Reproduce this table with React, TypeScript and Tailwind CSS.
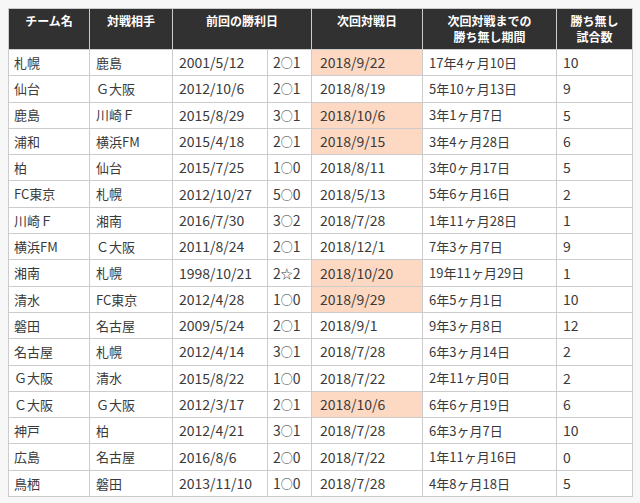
type Row = {
  team: string;
  opp: string;
  last: string;
  score: [string, string, string];
  next: string;
  hl: boolean;
  span: string;
  games: string;
};

const rows: Row[] = [
  { team: '札幌', opp: '鹿島', last: '2001/5/12', score: ['2', '○', '1'], next: '2018/9/22', hl: true, span: '17年4ヶ月10日', games: '10' },
  { team: '仙台', opp: 'Ｇ大阪', last: '2012/10/6', score: ['2', '○', '1'], next: '2018/8/19', hl: false, span: '5年10ヶ月13日', games: '9' },
  { team: '鹿島', opp: '川崎Ｆ', last: '2015/8/29', score: ['3', '○', '1'], next: '2018/10/6', hl: true, span: '3年1ヶ月7日', games: '5' },
  { team: '浦和', opp: '横浜FM', last: '2015/4/18', score: ['2', '○', '1'], next: '2018/9/15', hl: true, span: '3年4ヶ月28日', games: '6' },
  { team: '柏', opp: '仙台', last: '2015/7/25', score: ['1', '○', '0'], next: '2018/8/11', hl: false, span: '3年0ヶ月17日', games: '5' },
  { team: 'FC東京', opp: '札幌', last: '2012/10/27', score: ['5', '○', '0'], next: '2018/5/13', hl: false, span: '5年6ヶ月16日', games: '2' },
  { team: '川崎Ｆ', opp: '湘南', last: '2016/7/30', score: ['3', '○', '2'], next: '2018/7/28', hl: false, span: '1年11ヶ月28日', games: '1' },
  { team: '横浜FM', opp: 'Ｃ大阪', last: '2011/8/24', score: ['2', '○', '1'], next: '2018/12/1', hl: false, span: '7年3ヶ月7日', games: '9' },
  { team: '湘南', opp: '札幌', last: '1998/10/21', score: ['2', '☆', '2'], next: '2018/10/20', hl: true, span: '19年11ヶ月29日', games: '1' },
  { team: '清水', opp: 'FC東京', last: '2012/4/28', score: ['1', '○', '0'], next: '2018/9/29', hl: true, span: '6年5ヶ月1日', games: '10' },
  { team: '磐田', opp: '名古屋', last: '2009/5/24', score: ['2', '○', '1'], next: '2018/9/1', hl: false, span: '9年3ヶ月8日', games: '12' },
  { team: '名古屋', opp: '札幌', last: '2012/4/14', score: ['3', '○', '1'], next: '2018/7/28', hl: false, span: '6年3ヶ月14日', games: '2' },
  { team: 'Ｇ大阪', opp: '清水', last: '2015/8/22', score: ['1', '○', '0'], next: '2018/7/22', hl: false, span: '2年11ヶ月0日', games: '2' },
  { team: 'Ｃ大阪', opp: 'Ｇ大阪', last: '2012/3/17', score: ['2', '○', '1'], next: '2018/10/6', hl: true, span: '6年6ヶ月19日', games: '6' },
  { team: '神戸', opp: '柏', last: '2012/4/21', score: ['3', '○', '1'], next: '2018/7/28', hl: false, span: '6年3ヶ月7日', games: '10' },
  { team: '広島', opp: '名古屋', last: '2016/8/6', score: ['2', '○', '0'], next: '2018/7/22', hl: false, span: '1年11ヶ月16日', games: '0' },
  { team: '鳥栖', opp: '磐田', last: '2013/11/10', score: ['1', '○', '0'], next: '2018/7/28', hl: false, span: '4年8ヶ月18日', games: '5' },
];

const th = 'bg-[#313131] text-white font-bold text-[12px] leading-[16px] align-top text-center pt-[4px] border border-[#cccccc]';
const td = 'border border-[#cccccc] px-[5px] align-middle text-left whitespace-nowrap';

export default function App() {
  return (
    <div
      className="w-[640px] h-[503px] bg-[#f7f7f7] pt-[8px] pl-[8px] text-[#3a3a3a]"
      style={{ fontFamily: '"Noto Sans CJK JP", "Noto Sans", sans-serif' }}
    >
      <table className="border-collapse table-fixed w-[624px] bg-white">
        <colgroup>
          <col className="w-[81px]" />
          <col className="w-[83px]" />
          <col className="w-[95px]" />
          <col className="w-[44px]" />
          <col className="w-[111px]" />
          <col className="w-[134px]" />
          <col className="w-[76px]" />
        </colgroup>
        <thead>
          <tr className="h-[41px]">
            <th className={th}>チーム名</th>
            <th className={th}>対戦相手</th>
            <th className={th} colSpan={2}>前回の勝利日</th>
            <th className={th}>次回対戦日</th>
            <th className={th}>次回対戦までの<br />勝ち無し期間</th>
            <th className={th}>勝ち無し<br />試合数</th>
          </tr>
        </thead>
        <tbody>
          {rows.map((r) => (
            <tr key={r.team} className="h-[26.3px]">
              <td className={`${td} text-[13px]`}>{r.team}</td>
              <td className={`${td} text-[13px] pl-[6px]`}>{r.opp}</td>
              <td className={`${td} text-[14px] pl-[6px]`}>{r.last}</td>
              <td className={`${td} text-[14px] pl-[5px]`}>
                {r.score[0]}
                <span className="text-[12px]">{r.score[1]}</span>
                {r.score[2]}
              </td>
              <td className={`${td} text-[14px] pl-[8px] ${r.hl ? 'bg-[#fdd8c2]' : ''}`}>{r.next}</td>
              <td className={`${td} text-[13px] pl-[6px]`}>{r.span}</td>
              <td className={`${td} text-[14px] pl-[6px]`}>{r.games}</td>
            </tr>
          ))}
        </tbody>
      </table>
    </div>
  );
}
